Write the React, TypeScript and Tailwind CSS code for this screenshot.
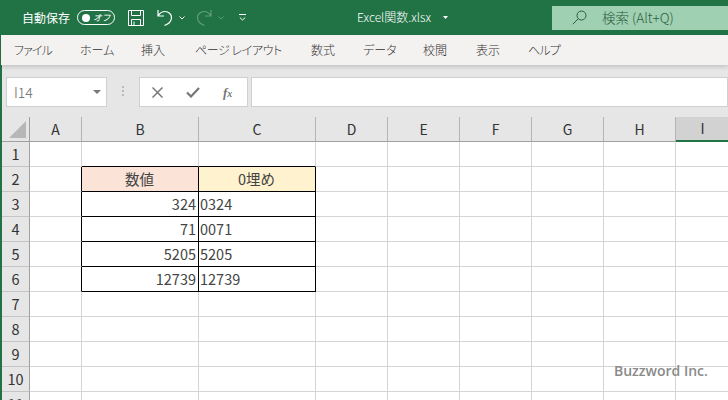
import React from 'react';

const JP = "font-['Noto_Sans_CJK_JP','Noto_Sans',sans-serif]";
const COLS = ['A', 'B', 'C', 'D', 'E', 'F', 'G', 'H', 'I'];
const TABS = [
  { label: 'ファイル', w: 'w-[66px] tracking-[-0.9px]' },
  { label: 'ホーム', w: 'w-[61px]' },
  { label: '挿入', w: 'w-[54px]' },
  { label: 'ページ レイアウト', w: 'w-[116px] tracking-[-0.4px]' },
  { label: '数式', w: 'w-[52px]' },
  { label: 'データ', w: 'w-[60px]' },
  { label: '校閲', w: 'w-[53px]' },
  { label: '表示', w: 'w-[52px]' },
  { label: 'ヘルプ', w: 'w-[40px] tracking-[-0.8px]' },
];

type Cell = { text: string; align?: 'right' | 'center' | 'left'; bg?: string };

const CELLS: Record<string, Cell> = {
  B2: { text: '数値', align: 'center', bg: 'bg-[#fbe3d8]' },
  C2: { text: '0埋め', align: 'center', bg: 'bg-[#fff2cf]' },
  B3: { text: '324', align: 'right' },
  C3: { text: '0324' },
  B4: { text: '71', align: 'right' },
  C4: { text: '0071' },
  B5: { text: '5205', align: 'right' },
  C5: { text: '5205' },
  B6: { text: '12739', align: 'right' },
  C6: { text: '12739' },
};

function inTable(col: string, row: number) {
  return (col === 'B' || col === 'C') && row >= 2 && row <= 6;
}

function GridCell({ col, row }: { col: string; row: number }) {
  const cell = CELLS[col + row];
  const rightBlack = inTable(col, row) || (col === 'A' && row >= 2 && row <= 6);
  const bottomBlack = inTable(col, row) || ((col === 'B' || col === 'C') && row === 1);
  return (
    <div
      className={`flex items-center pb-[1px] pl-[1px] pr-[2px] text-[14.5px] font-normal text-[#444] border-r border-b ${
        rightBlack ? 'border-r-black' : 'border-r-[#d4d4d4]'
      } ${bottomBlack ? 'border-b-black' : 'border-b-[#d4d4d4]'} ${cell?.bg ?? 'bg-white'} ${
        cell?.align === 'right' ? 'justify-end' : cell?.align === 'center' ? 'justify-center' : 'justify-start'
      }`}
    >
      {cell?.text}
    </div>
  );
}

function TitleBar() {
  return (
    <div className="flex h-[35px] items-center bg-[#217346] pl-[22px] text-white">
      <span className={`${JP} text-[12px] w-[55px]`}>自動保存</span>
      <div className="flex h-[15px] w-[38px] items-center justify-between rounded-full border border-white pl-[4px] pr-[4px]">
        <span className="h-[8px] w-[8px] rounded-full bg-white" />
        <span className={`${JP} text-[9px] italic leading-none tracking-[-0.5px]`}>オフ</span>
      </div>
      <svg className="ml-[13px]" width="16" height="16" viewBox="0 0 16 16" fill="none" stroke="white" strokeWidth="1">
        <path d="M.5.5h15v15H.5zM3.5.5v5h9v-5M3.5 15.5v-6h9v6M6 11.5v4" />
      </svg>
      <svg className="ml-[13px]" width="17" height="18" viewBox="0 0 17 18" fill="none" stroke="white" strokeWidth="1.2">
        <path d="M1 1v6h6M1.2 6.8C3 3.6 5.5 2.5 8 2.5c3.5 0 6.5 2.6 6.5 6 0 4-3 6.5-7 8" />
      </svg>
      <svg className="ml-[5px]" width="6" height="4" viewBox="0 0 6 4" fill="none" stroke="white" strokeWidth="1">
        <path d="M.5.5 3 3 5.5.5" />
      </svg>
      <svg className="ml-[11px]" width="16" height="18" viewBox="0 0 16 18" fill="none" stroke="#5f9e7c" strokeWidth="1.2">
        <path d="M15 1v6H9M14.8 6.8C13 3.6 10.5 2.5 8 2.5c-3.5 0-6.5 2.6-6.5 6 0 4 3 6.5 7 8" />
      </svg>
      <svg className="ml-[6px]" width="6" height="4" viewBox="0 0 6 4" fill="none" stroke="#5f9e7c" strokeWidth="1">
        <path d="M.5.5 3 3 5.5.5" />
      </svg>
      <svg className="ml-[15px]" width="7" height="7" viewBox="0 0 7 7" fill="none" stroke="white" strokeWidth="1">
        <path d="M0 .5h7M.8 3.5 3.5 6 6.2 3.5" />
      </svg>
      <span className={`${JP} ml-[111px] mb-[2px] w-[81px] text-[12px] font-light whitespace-nowrap`}>Excel関数.xlsx</span>
      <svg className="ml-[5px]" width="5" height="3" viewBox="0 0 5 3" fill="white">
        <path d="M0 0h5L2.5 3z" />
      </svg>
      <div className="ml-auto flex h-[24px] w-[176px] items-center bg-[#a0d0b2] pl-[20px] text-[#2c5e41]">
        <svg width="15" height="15" viewBox="0 0 15 15" fill="none" stroke="#2c5e41" strokeWidth="1">
          <circle cx="9.5" cy="5.5" r="4.5" />
          <path d="M6.2 8.8.8 14.2" />
        </svg>
        <span className={`${JP} ml-[15px] text-[13.5px] font-light whitespace-nowrap`}>検索 (Alt+Q)</span>
      </div>
    </div>
  );
}

function Tabs() {
  return (
    <div
      className={`${JP} relative flex h-[30px] items-center bg-[#f3f2f1] pl-[13px] text-[12px] font-light text-[#333] [font-feature-settings:'palt'] shadow-[0_2px_4px_rgba(0,0,0,0.15)]`}
    >
      {TABS.map((t) => (
        <span key={t.label} className={`whitespace-nowrap ${t.w}`}>
          {t.label}
        </span>
      ))}
    </div>
  );
}

function FormulaBar() {
  return (
    <div className="flex h-[52px] items-start bg-[#e6e6e6] pt-[12px] pl-[4px]">
      <div className={`${JP} flex h-[30px] w-[101px] items-center justify-between border border-[#d0d0d0] bg-white pl-[7px] pr-[5px] text-[14px] font-light text-[#666]`}>
        <span>I14</span>
        <svg width="8" height="4" viewBox="0 0 8 4" fill="#777">
          <path d="M0 0h8L4 4z" />
        </svg>
      </div>
      <div className="mx-[14px] mt-[9px] flex w-[4px] flex-col items-center gap-[2px]">
        <span className="h-[2px] w-[2px] bg-[#bbb]" />
        <span className="h-[2px] w-[2px] bg-[#bbb]" />
        <span className="h-[2px] w-[2px] bg-[#bbb]" />
      </div>
      <div className="flex h-[30px] w-[109px] items-center border border-[#d0d0d0] bg-white pl-[12px]">
        <svg width="11" height="11" viewBox="0 0 11 11" fill="none" stroke="#777" strokeWidth="1.5">
          <path d="M.5.5l10 10M10.5.5l-10 10" />
        </svg>
        <svg className="ml-[23px]" width="14" height="11" viewBox="0 0 14 11" fill="none" stroke="#777" strokeWidth="2.2">
          <path d="M1 5.5 5 9.5 13 1" />
        </svg>
        <span className="ml-[23px] font-['Liberation_Serif',serif] text-[13px] font-bold italic leading-none text-[#777]">
          f<span className="text-[10px]">x</span>
        </span>
      </div>
      <div className="ml-[3px] h-[30px] flex-1 border border-[#d0d0d0] bg-white" />
    </div>
  );
}

function CornerCell() {
  return (
    <div className="flex items-end justify-end border-r border-b border-r-[#a0a0a0] border-b-[#a0a0a0] bg-[#e6e6e6] pr-[3px] pb-[3px]">
      <svg width="17" height="17" viewBox="0 0 17 17" fill="#b7b7b7">
        <path d="M17 0v17H0z" />
      </svg>
    </div>
  );
}

function ColHeader({ col }: { col: string }) {
  const active = col === 'I';
  return (
    <div
      className={`flex items-center justify-center border-r text-[14px] font-normal text-[#333] ${
        active
          ? 'border-b-2 border-b-[#217346] border-r-transparent bg-[#d2d2d2]'
          : 'border-b border-b-[#a0a0a0] border-r-[#b4b4b4] bg-[#e6e6e6]'
      }`}
    >
      {col}
    </div>
  );
}

function Sheet() {
  const rows = [1, 2, 3, 4, 5, 6, 7, 8, 9, 10, 11];
  return (
    <div className={`${JP} grid grid-cols-[28px_52px_117px_117px_72px_72px_72px_72px_72px_54px] auto-rows-[25px]`}>
      <CornerCell />
      {COLS.map((c) => (
        <ColHeader key={c} col={c} />
      ))}
      {rows.map((r) => (
        <React.Fragment key={r}>
          <div className="flex items-center justify-center border-r border-b border-r-[#a0a0a0] border-b-[#c4c4c4] bg-[#e6e6e6] pb-[1px] text-[14.5px] font-normal text-[#333]">
            {r}
          </div>
          {COLS.map((c) => (
            <GridCell key={c} col={c} row={r} />
          ))}
        </React.Fragment>
      ))}
    </div>
  );
}

export default function App() {
  return (
    <div className="relative h-[400px] w-[728px] overflow-hidden bg-white">
      <TitleBar />
      <div className="bg-[#217346] pl-[1px]">
        <Tabs />
      </div>
      <div className="bg-[#217346] pl-[2px]">
        <FormulaBar />
        <Sheet />
      </div>
      <span className="absolute left-[614px] top-[360px] font-['Open_Sans',sans-serif] text-[14px] font-semibold text-[#8a8a8a]">
        Buzzword Inc.
      </span>
    </div>
  );
}
